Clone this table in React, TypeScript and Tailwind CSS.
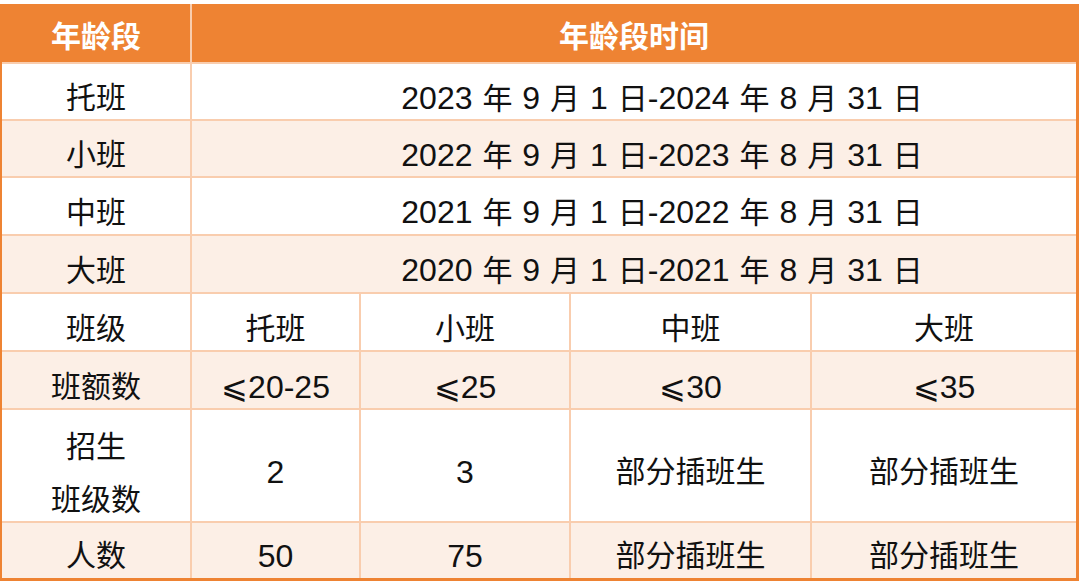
import React from "react";

const ff = { fontFamily: '"Liberation Sans", "Noto Sans CJK SC", sans-serif' };

function T({ s }: { s: string }) {
  const parts = s.split(/([0-9⩽\-]+)/);
  return (
    <>
      {parts.map((p, i) =>
        /^[0-9⩽\-]+$/.test(p) ? (
          <span key={i} className="text-[32px]">
            {p}
          </span>
        ) : (
          <React.Fragment key={i}>{p}</React.Fragment>
        )
      )}
    </>
  );
}

const dates = [
  ["托班", "2023 年 9 月 1 日-2024 年 8 月 31 日", "h-[57px] bg-white"],
  ["小班", "2022 年 9 月 1 日-2023 年 8 月 31 日", "h-[57px] bg-[#fcefe6]"],
  ["中班", "2021 年 9 月 1 日-2022 年 8 月 31 日", "h-[58px] bg-white"],
  ["大班", "2020 年 9 月 1 日-2021 年 8 月 31 日", "h-[58px] bg-[#fcefe6]"],
];

const line = "border-[#f9cdae]";

function Cell({ children, last, className = "" }: { children?: React.ReactNode; last?: boolean; className?: string }) {
  return (
    <div className={`flex items-center justify-center ${last ? "" : `border-r-2 ${line}`} ${className || "pt-[13px]"}`}>
      {children}
    </div>
  );
}

export default function App() {
  const grid5 = "grid grid-cols-[190px_169px_210px_241px_1fr]";
  return (
    <div className="w-[1080px] h-[584px] bg-white pt-[4px]" style={ff}>
      <div className="w-[1079px] border-l-2 border-r-[3px] border-b-[3px] border-[#ee8333] text-[30px] text-[#111] leading-none">
        <div className={`grid grid-cols-[190px_1fr] h-[60px] bg-[#ee8333] text-white font-bold border-b-2 ${line}`}>
          <Cell className="pt-[7px]">年龄段</Cell>
          <Cell last className="pt-[7px]">年龄段时间</Cell>
        </div>
        {dates.map(([a, b, c]) => (
          <div key={a} className={`grid grid-cols-[190px_1fr] border-b-2 ${line} ${c}`}>
            <Cell>{a}</Cell>
            <Cell last className="pt-[12px] pl-[56px]">
              <span className="[word-spacing:1.6px]">
                <T s={b} />
              </span>
            </Cell>
          </div>
        ))}
        <div className={`${grid5} h-[58px] bg-white border-b-2 ${line}`}>
          <Cell>班级</Cell>
          <Cell>托班</Cell>
          <Cell>小班</Cell>
          <Cell>中班</Cell>
          <Cell last>大班</Cell>
        </div>
        <div className={`${grid5} h-[58px] bg-[#fcefe6] border-b-2 ${line}`}>
          <Cell>班额数</Cell>
          <Cell><T s="⩽20-25" /></Cell>
          <Cell><T s="⩽25" /></Cell>
          <Cell><T s="⩽30" /></Cell>
          <Cell last><T s="⩽35" /></Cell>
        </div>
        <div className={`${grid5} h-[113px] bg-white border-b-2 ${line}`}>
          <Cell className="pt-[16px]">
            <div className="flex flex-col items-center gap-[23px]">
              <span>招生</span>
              <span>班级数</span>
            </div>
          </Cell>
          <Cell><T s="2" /></Cell>
          <Cell><T s="3" /></Cell>
          <Cell>部分插班生</Cell>
          <Cell last>部分插班生</Cell>
        </div>
        <div className={`${grid5} h-[55px] bg-[#fcefe6]`}>
          <Cell className="pt-[10px]">人数</Cell>
          <Cell className="pt-[10px]"><T s="50" /></Cell>
          <Cell className="pt-[10px]"><T s="75" /></Cell>
          <Cell className="pt-[10px]">部分插班生</Cell>
          <Cell last className="pt-[10px]">部分插班生</Cell>
        </div>
      </div>
    </div>
  );
}
